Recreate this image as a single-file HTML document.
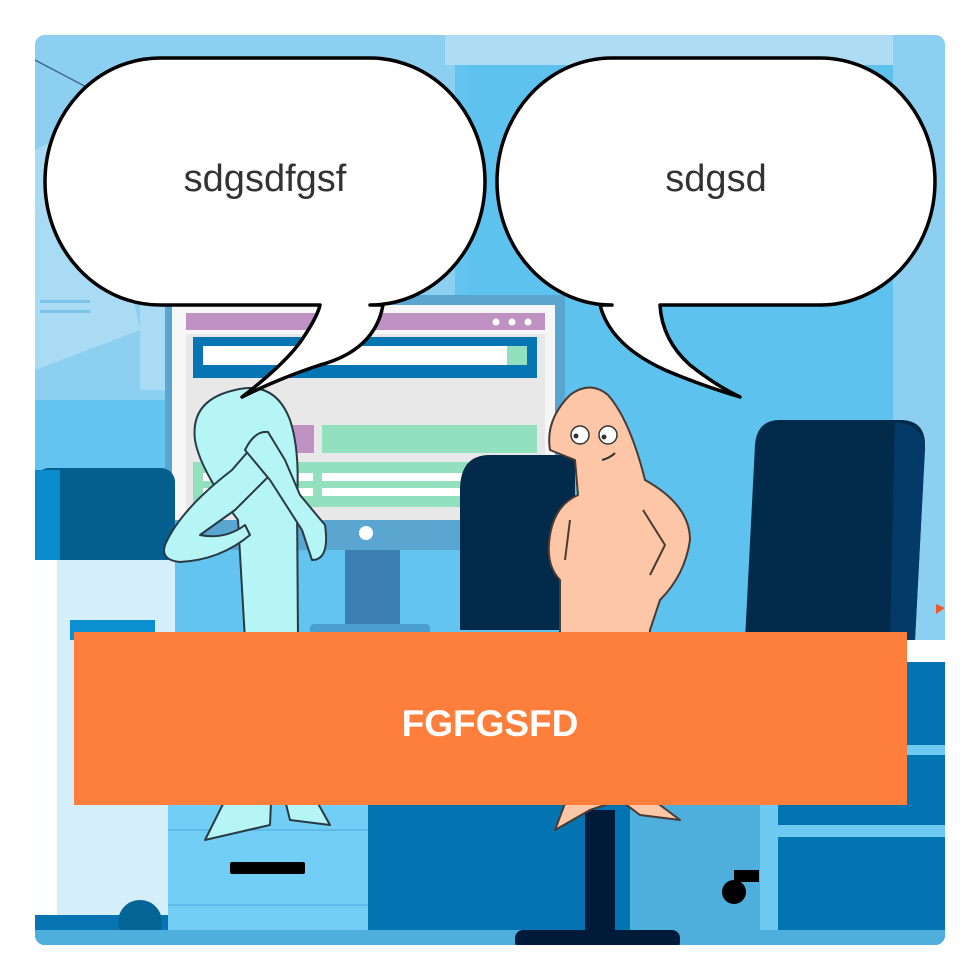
<!DOCTYPE html>
<html><head><meta charset="utf-8"><style>
html,body{margin:0;padding:0;background:#fff;width:980px;height:980px;overflow:hidden}
svg{display:block}
</style></head><body>
<svg width="980" height="980" viewBox="0 0 980 980" xmlns="http://www.w3.org/2000/svg">
<defs><clipPath id="c"><rect x="35" y="35" width="910" height="910" rx="10"/></clipPath></defs>
<g clip-path="url(#c)">
<rect x="35" y="35" width="910" height="910" fill="#62c4ef"/>
<rect x="35" y="35" width="420" height="480" fill="#8dcff0"/>
<line x1="35" y1="60" x2="130" y2="110" stroke="#3b6e90" stroke-width="1.5"/>
<polygon points="35,150 95,120 140,330 35,370" fill="#a9dbf4"/>
<rect x="40" y="300" width="50" height="3" fill="#7cc3ea"/><rect x="40" y="310" width="50" height="3" fill="#7cc3ea"/>
<rect x="140" y="300" width="30" height="90" fill="#a9dbf4"/>
<rect x="35" y="400" width="140" height="70" fill="#62c4ef"/>
<rect x="445" y="35" width="500" height="30" fill="#afdcf5"/>
<rect x="468" y="65" width="425" height="580" fill="#5ec2ee"/>
<rect x="893" y="35" width="52" height="610" fill="#8dcff0"/>
<rect x="165" y="295" width="400" height="255" fill="#5aa6d0"/>
<rect x="172" y="305" width="383" height="215" fill="#f6f6f6"/>
<rect x="186" y="313" width="359" height="17" fill="#c092c4"/>
<circle cx="496" cy="322" r="3.5" fill="#fff"/><circle cx="512" cy="322" r="3.5" fill="#fff"/><circle cx="528" cy="322" r="3.5" fill="#fff"/>
<rect x="186" y="334" width="359" height="186" fill="#e8e8e8"/>
<rect x="193" y="337" width="344" height="41" fill="#0575b4"/>
<rect x="203" y="346" width="304" height="19" fill="#fff"/><rect x="507" y="346" width="20" height="19" fill="#92e0be"/>
<rect x="290" y="425" width="24" height="28" fill="#c092c4"/>
<rect x="322" y="425" width="215" height="28" fill="#92e0be"/>
<rect x="193" y="462" width="344" height="45" fill="#92e0be"/>
<rect x="203" y="473" width="110" height="8" fill="#fff"/><rect x="322" y="473" width="215" height="8" fill="#fff"/>
<rect x="203" y="488" width="110" height="8" fill="#fff"/><rect x="322" y="488" width="215" height="8" fill="#fff"/>
<circle cx="366" cy="533" r="7" fill="#fff"/>
<rect x="345" y="550" width="55" height="80" fill="#3d7fb3"/>
<rect x="310" y="624" width="120" height="12" rx="4" fill="#4a9fcf"/>
<rect x="35" y="468" width="140" height="95" rx="14" fill="#055f8e"/>
<rect x="35" y="470" width="25" height="90" fill="#0a8ccc"/>
<rect x="35" y="560" width="140" height="370" fill="#d4eefa"/>
<rect x="35" y="560" width="22" height="370" fill="#fdfeff"/>
<rect x="70" y="620" width="85" height="20" fill="#0b8fd0"/>
<rect x="35" y="915" width="135" height="30" fill="#0574b0"/>
<circle cx="140" cy="922" r="22" fill="#046496"/>
<rect x="168" y="800" width="200" height="135" fill="#72cef5"/>
<line x1="168" y1="830" x2="368" y2="830" stroke="#4aa7d8" stroke-width="1"/>
<line x1="168" y1="905" x2="368" y2="905" stroke="#4aa7d8" stroke-width="1"/>
<rect x="230" y="862" width="75" height="12" rx="2" fill="#000"/>
<rect x="368" y="800" width="577" height="145" fill="#0274b2"/>
<rect x="630" y="790" width="140" height="140" fill="#4eafdc"/>
<rect x="760" y="640" width="18" height="290" fill="#6fcaf2"/>
<rect x="778" y="640" width="167" height="22" fill="#ffffff"/>
<rect x="778" y="662" width="167" height="268" fill="#0274b2"/>
<rect x="778" y="745" width="167" height="10" fill="#6fcaf2"/>
<rect x="778" y="825" width="167" height="12" fill="#6fcaf2"/>
<polygon points="936,604 945,608 936,614" fill="#f05a2a"/>
<rect x="35" y="930" width="910" height="15" fill="#4eafdc"/>
<circle cx="734" cy="892" r="12" fill="#000"/><rect x="734" y="870" width="25" height="12" fill="#000"/>
<rect x="585" y="810" width="30" height="130" fill="#001a3a"/>
<rect x="515" y="930" width="165" height="20" rx="8" fill="#001a3a"/>
<path d="M490,455 H575 V630 H460 V490 Q460,455 490,455Z" fill="#022a4a"/>
<path d="M780,420 H900 Q925,420 925,445 L915,640 H745 L755,445 Q757,420 780,420Z" fill="#022a4a"/>
<path d="M895,422 Q925,425 925,450 L915,640 H890 Z" fill="#033a68"/>
<g stroke="#2a3a44" stroke-width="2" stroke-linejoin="round" fill="#b5f5f5">
<path d="M205,840 L235,780 L245,640 L238,520 Q200,470 195,440 Q190,400 235,390 Q275,380 290,420 Q300,450 297,500 L298,640 L305,780 L330,825 L290,820 L280,780 L272,780 L270,825 Z"/>
<path d="M232,470 L258,440 L275,470 L235,510 L200,535 Q225,540 245,525 L250,535 Q220,560 180,562 Q160,560 165,545 Q180,510 232,470Z"/>
<path d="M245,450 Q255,430 268,432 L285,460 L300,495 L325,525 Q330,560 312,560 L302,530 L270,480 Z"/>
</g>
<g stroke="#4a3a34" stroke-width="2" stroke-linejoin="round" fill="#fdc6a7">
<path d="M555,830 L570,790 L560,640 L560,580 Q545,565 550,535 Q555,505 578,495 L575,460 L550,450 Q545,420 570,395 Q590,380 608,395 Q630,420 645,480 Q690,505 690,540 Q685,575 660,600 L650,630 L640,790 L680,820 L640,815 L620,800 L590,810 Z"/>
<path d="M643,510 L665,545 L650,575" fill="none"/>
<path d="M570,520 L565,560" fill="none"/>
</g>
<circle cx="580" cy="435" r="9" fill="#fff" stroke="#333" stroke-width="1.5"/><circle cx="608" cy="435" r="9" fill="#fff" stroke="#333" stroke-width="1.5"/>
<circle cx="576" cy="436" r="2.5" fill="#333"/><circle cx="604" cy="437" r="2.5" fill="#333"/>
<path d="M602,460 Q610,458 615,453" fill="none" stroke="#333" stroke-width="2"/>
<rect x="74" y="632" width="833" height="173" fill="#fe7f3b"/>
<text x="490" y="736" text-anchor="middle" font-family="Liberation Sans, sans-serif" font-weight="bold" font-size="37" fill="#fff">FGFGSFD</text>
</g>
<g fill="#fff" stroke="#000" stroke-width="3.5" stroke-linejoin="round">
<path d="M160,58 H370 A115,123.5 0 0 1 370,305 H383 Q375,350 320,365 Q280,378 242,397 Q290,360 305,335 Q318,315 320,305 H160 A115,123.5 0 0 1 160,58Z"/>
<path d="M612,58 H820 A115,123.5 0 0 1 820,305 H660 Q662,340 690,365 Q715,385 740,397 Q700,385 665,370 Q610,345 600,305 H612 A115,123.5 0 0 1 612,58Z"/>
</g>
<text x="265" y="191" text-anchor="middle" font-family="Liberation Sans, sans-serif" font-size="38" fill="#333">sdgsdfgsf</text>
<text x="716" y="191" text-anchor="middle" font-family="Liberation Sans, sans-serif" font-size="38" fill="#333">sdgsd</text>
</svg>
</body></html>
